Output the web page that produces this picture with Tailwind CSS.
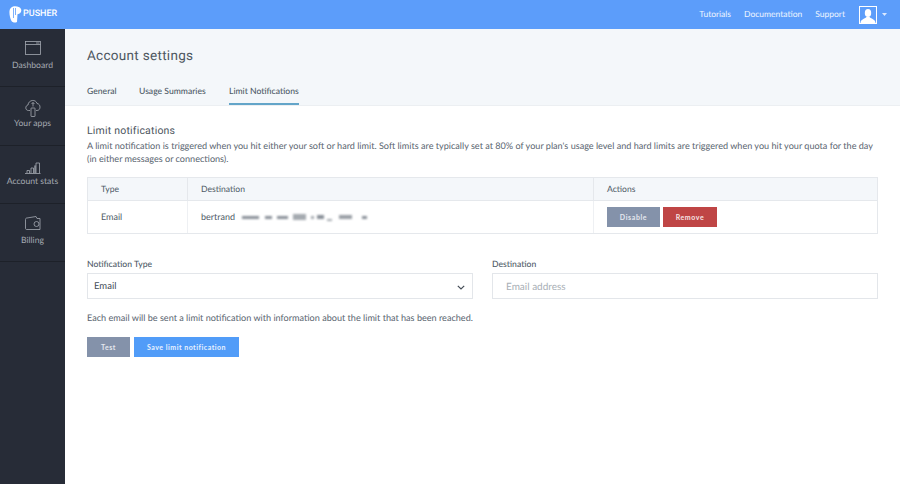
<!DOCTYPE html>
<html lang="en">
<head>
  <meta charset="UTF-8">
  <title>Account settings</title>
  <script src="https://cdn.jsdelivr.net/npm/@tailwindcss/browser@4"></script>
</head>
<body class="bg-white font-['Lato',sans-serif] text-[#4e5a66] overflow-hidden [text-rendering:geometricPrecision]">
  <div class="w-[900px] h-[484px] flex flex-col overflow-hidden">
    <header class="h-[29px] shrink-0 bg-[#5c9dfa] flex items-center justify-between pl-[9px] pr-[13px]">
      <div class="flex items-center gap-[1px] text-white">
        <svg width="13" height="17" viewBox="0 0 13 17" fill="#fff"><path d="M4 0.5 C7 -0.2 11 0.5 12 3 C13 5.5 11.5 8 8.5 8.3 L8 16 C6 17 3.5 16.5 2.5 15 C1 12 0.2 8 0.5 5 C0.7 3 2 1 4 0.5Z"/><path d="M4.5 2 L4.5 12 M6.5 2 L6.5 9" stroke="#5c9dfa" stroke-width="0.8" fill="none"/></svg>
        <span class="font-['Roboto',sans-serif] text-[9px] font-medium">PUSHER</span>
      </div>
      <nav class="flex items-center text-[8.5px] text-[#eef5ff]">
        <a class="mr-[13px]">Tutorials</a>
        <a class="mr-[13px]">Documentation</a>
        <a class="mr-[14px]">Support</a>
        <span class="w-[18px] h-[18px] bg-[#5c9dfa] border border-white overflow-hidden block">
          <svg width="16" height="16" viewBox="0 0 16 16" fill="#fff"><ellipse cx="8" cy="6" rx="3.200" ry="4"/><path d="M0.500 16 C0.500 12.500 4.500 12 6.500 10 L9.500 10 C11.500 12 15.500 12.500 15.500 16Z"/></svg>
        </span>
        <svg class="ml-[5px]" width="5" height="3" viewBox="0 0 5 3" fill="#dbe9ff"><path d="M0 0H5L2.500 3Z"/></svg>
      </nav>
    </header>
    <div class="flex flex-1 min-h-0">
      <aside class="w-[65px] shrink-0 bg-[#272c37] text-[#a5aab2] text-[8.6px] text-center">
        <a class="h-[58px] border-b border-[#1d2129] flex flex-col items-center pt-[12px]">
          <svg width="16" height="14" viewBox="0 0 16 14" fill="none" stroke="#a5aab2" stroke-width="0.8"><rect x="0.5" y="0.5" width="15" height="13"/><path d="M0.5 3.5H15.5M11 2H14.5"/></svg>
          <span class="mt-[4px]">Dashboard</span>
        </a>
        <a class="h-[59px] border-b border-[#1d2129] flex flex-col items-center pt-[11px]">
          <svg width="16" height="19" viewBox="0 0 16 19" fill="none" stroke="#b8bcc3" stroke-width="0.7"><path d="M5 12.500 H3.500 C0 12.500 0 7.500 3 7 C3.500 1.500 11 1 12 5.500 C16 5.800 16 12.500 12 12.500 H11"/><rect x="6" y="10" width="4" height="8.500" rx="0.500"/><path d="M8 8.500V4.500M6.500 6L8 4.500L9.500 6"/></svg>
          <span class="mt-[0px]">Your apps</span>
        </a>
        <a class="h-[58px] border-b border-[#1d2129] flex flex-col items-center pt-[16px]">
          <svg width="16" height="12" viewBox="0 0 16 12" fill="none" stroke="#a5aab2" stroke-width="0.8"><path d="M0 11.500H15.500M2 11V8.500H4.500V11M6 11V6H8.500V11M10 11V3.500H10V11M11 11V1H14.500V11"/></svg>
          <span class="mt-[1px] whitespace-nowrap">Account stats</span>
        </a>
        <a class="h-[58px] border-b border-[#1d2129] flex flex-col items-center pt-[12px]">
          <svg width="16" height="14" viewBox="0 0 16 14" fill="none" stroke="#a5aab2" stroke-width="0.8"><path d="M0.500 3.500 C0.500 2.500 1 2 2 2 L11 0.500 L12 2.500 H15 V13.500 H1.500 C1 13.500 0.500 13 0.500 12.500Z"/><circle cx="11.500" cy="8" r="2.500"/></svg>
          <span class="mt-[4px]">Billing</span>
        </a>
      </aside>
      <main class="flex-1 min-w-0">
        <div class="h-[77px] bg-[#f4f7fa] border-b border-[#eceff2] px-[22px]">
          <h1 class="font-['Roboto',sans-serif] text-[13.5px] leading-[20px] pt-[17px] tracking-[0.3px] text-[#4d5660]">Account settings</h1>
          <div class="flex mt-[17px] text-[8.6px] font-medium text-[#4e5a66]">
            <a class="w-[52px] h-[22px] leading-[16px]">General</a>
            <a class="w-[90px] h-[22px] leading-[16px]">Usage Summaries</a>
            <a class="h-[22px] leading-[16px] border-b-2 border-[#63a5c9]">Limit Notifications</a>
          </div>
        </div>
        <section class="px-[22px] pt-[17px]">
          <h2 class="font-['Roboto',sans-serif] text-[10.5px] leading-[16px] tracking-[0.2px] text-[#4d5660]">Limit notifications</h2>
          <p class="text-[9.1px] leading-[13px] text-[#5a6570] w-[795px]">A limit notification is triggered when you hit either your soft or hard limit. Soft limits are typically set at 80% of your plan's usage level and hard limits are triggered when you hit your quota for the day (in either messages or connections).</p>
          <div class="mt-[12px] w-[791px] border border-[#e5e8ec] text-[8.6px]">
            <div class="flex h-[23px] bg-[#f4f7fa] border-b border-[#e5e8ec] items-center">
              <div class="w-[100px] pl-[13px] h-full flex items-center border-r border-[#e5e8ec]">Type</div>
              <div class="w-[406px] pl-[13px] h-full flex items-center border-r border-[#e5e8ec]">Destination</div>
              <div class="pl-[13px]">Actions</div>
            </div>
            <div class="flex h-[32px] items-center">
              <div class="w-[100px] pl-[13px] h-full flex items-center border-r border-[#eef0f3] text-[9px]">Email</div>
              <div class="w-[406px] pl-[13px] h-full flex items-center border-r border-[#eef0f3] text-[9px]">
                <span class="w-[41px]">bertrand</span>
                <span class="flex items-center blur-[0.8px]">
                  <i class="block w-[17px] h-[3px] bg-[#8a9099]"></i>
                  <i class="block w-[7px] h-[3px] ml-[6px] bg-[#8a9099]"></i>
                  <i class="block w-[11px] h-[3px] ml-[5px] bg-[#8a9099]"></i>
                  <i class="block w-[13px] h-[6px] ml-[5px] bg-[#a5aab0]"></i>
                  <i class="block w-[3px] h-[3px] ml-[5px] bg-[#a5aab0]"></i>
                  <i class="block w-[7px] h-[4px] ml-[3px] bg-[#8a9099]"></i>
                  <i class="block w-[5px] h-[2px] ml-[3px] mt-[5px] bg-[#a5aab0]"></i>
                  <i class="block w-[13px] h-[4px] ml-[7px] bg-[#9a9fa6]"></i>
                  <i class="block w-[5px] h-[3px] ml-[10px] bg-[#8a9099]"></i>
                </span>
              </div>
              <div class="pl-[13px] flex gap-[3px]">
                <button class="w-[53px] h-[20px] bg-[#8492aa] text-[#e4e8ee] text-[7px] font-bold tracking-[0.6px]">Disable</button>
                <button class="w-[54px] h-[20px] bg-[#bf4545] text-[#f6e4e4] text-[7px] font-bold tracking-[0.6px]">Remove</button>
              </div>
            </div>
          </div>
          <form class="grid grid-cols-2 gap-x-[19px] w-[791px] mt-[24px]">
            <label class="block">
              <span class="block text-[8.6px] font-medium leading-[13px]">Notification Type</span>
              <span class="mt-[2px] h-[26px] border border-[#e3e6ea] flex items-center justify-between pl-[6px] pr-[7px] pt-[2px] text-[9.5px] text-[#454d57]">
                Email
                <svg width="8" height="5" viewBox="0 0 8 5" fill="none" stroke="#454d57" stroke-width="1.200"><path d="M0.800 0.800L4 4L7.200 0.800"/></svg>
              </span>
            </label>
            <label class="block">
              <span class="block text-[8.6px] font-medium leading-[13px]">Destination</span>
              <span class="mt-[2px] h-[26px] border border-[#e3e6ea] flex items-center pl-[13px] pt-[2px] text-[10px] text-[#a9afb6]">Email address</span>
            </label>
          </form>
          <p class="mt-[12px] text-[9.1px] leading-[14px] text-[#5a6570]">Each email will be sent a limit notification with information about the limit that has been reached.</p>
          <div class="flex gap-[4px] mt-[12px]">
            <button class="w-[43px] h-[20px] bg-[#8492aa] text-[#e4e8ee] text-[7px] font-bold tracking-[0.5px]">Test</button>
            <button class="w-[105px] h-[20px] bg-[#519cf8] text-[#e8f2ff] text-[7px] font-bold tracking-[0.5px]">Save limit notification</button>
          </div>
        </section>
      </main>
    </div>
  </div>
</body>
</html>
